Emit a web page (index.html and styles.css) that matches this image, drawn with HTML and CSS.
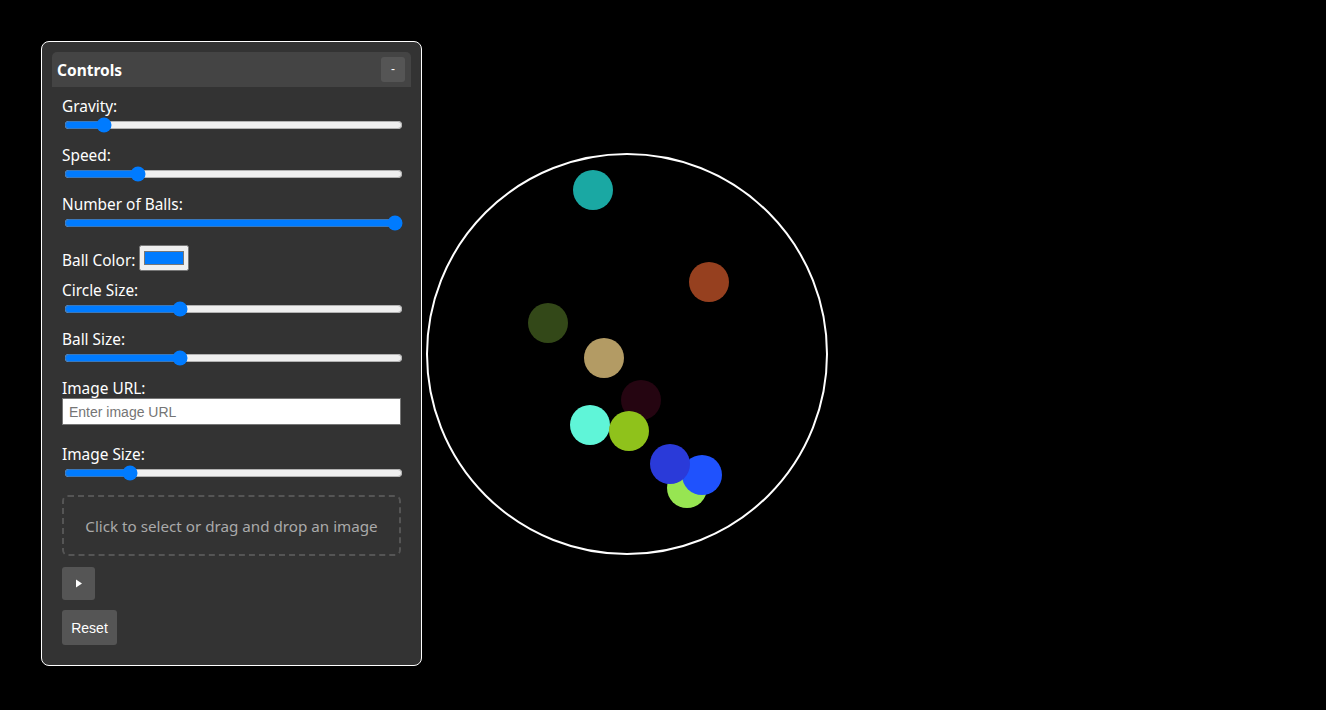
FILE: index.html
```html
<!DOCTYPE html>
<html lang="en">
<head>
<meta charset="utf-8">
<title>Bouncing Balls</title>
<link rel="stylesheet" href="styles.css">
</head>
<body>
<div class="stage">
  <svg class="canvas" width="1326" height="710" viewBox="0 0 1326 710" xmlns="http://www.w3.org/2000/svg">
    <circle cx="627" cy="354" r="200" fill="none" stroke="#ffffff" stroke-width="2"/>
    <circle cx="593" cy="190" r="20" fill="#1aa8a3"/>
    <circle cx="709" cy="282" r="20" fill="#96401f"/>
    <circle cx="548" cy="323" r="20" fill="#334818"/>
    <circle cx="604" cy="358" r="20" fill="#b39b64"/>
    <circle cx="641" cy="400" r="20" fill="#250511"/>
    <circle cx="590" cy="425" r="20" fill="#5ff5d8"/>
    <circle cx="629" cy="431" r="20" fill="#8fc21b"/>
    <circle cx="687" cy="488" r="20" fill="#97e552"/>
    <circle cx="702" cy="475" r="20" fill="#1f52fd"/>
    <circle cx="670" cy="464" r="20" fill="#2a3ad9"/>
  </svg>
</div>

<div class="panel">
  <div class="panel-header">
    <span class="panel-title">Controls</span>
    <button class="collapse-btn">-</button>
  </div>
  <div class="panel-body">
    <div class="control">
      <label class="control-label">Gravity:</label>
      <input class="slider" type="range" min="0" max="1000" value="100">
    </div>
    <div class="control">
      <label class="control-label">Speed:</label>
      <input class="slider" type="range" min="0" max="1000" value="204">
    </div>
    <div class="control">
      <label class="control-label">Number of Balls:</label>
      <input class="slider" type="range" min="0" max="1000" value="1000">
    </div>
    <div class="control color-row">
      <label class="control-label inline">Ball Color:</label>
      <input class="color-input" type="color" value="#007bff">
    </div>
    <div class="control">
      <label class="control-label">Circle Size:</label>
      <input class="slider" type="range" min="0" max="1000" value="334">
    </div>
    <div class="control">
      <label class="control-label">Ball Size:</label>
      <input class="slider" type="range" min="0" max="1000" value="334">
    </div>
    <div class="control">
      <label class="control-label">Image URL:</label>
      <input class="text-input" type="text" placeholder="Enter image URL">
    </div>
    <div class="control">
      <label class="control-label">Image Size:</label>
      <input class="slider" type="range" min="0" max="1000" value="180">
    </div>
    <div class="dropzone">Click to select or drag and drop an image</div>
    <button class="btn play-btn"><svg width="8" height="9" viewBox="0 0 8 9"><path d="M1 0.5 L7 4.5 L1 8.5 Z" fill="#ffffff"/></svg></button>
    <button class="btn reset-btn">Reset</button>
  </div>
</div>
</body>
</html>
```

FILE: styles.css
```css
html, body {
  margin: 0;
  padding: 0;
  background: #000000;
  overflow: hidden;
}

.stage {
  width: 1326px;
  height: 710px;
}

.canvas {
  display: block;
}

.panel {
  position: absolute;
  left: 41px;
  top: 41px;
  width: 359px;
  padding: 10px;
  background: #333333;
  border: 1px solid #ffffff;
  border-radius: 8px;
  font-family: "Noto Sans", "Open Sans", sans-serif;
  color: #ffffff;
}

.panel-header {
  display: flex;
  align-items: center;
  justify-content: space-between;
  height: 35px;
  padding: 0 6px 0 5px;
  background: #444444;
  border-radius: 5px 5px 0 0;
  box-sizing: border-box;
}

.panel-title {
  font-size: 15.5px;
  font-weight: 700;
}

.collapse-btn {
  width: 24px;
  height: 25px;
  padding: 0;
  border: none;
  border-radius: 3px;
  background: #555555;
  color: #ffffff;
  font-family: "Liberation Sans", Arial, sans-serif;
  font-size: 12px;
  line-height: 25px;
}

.panel-body {
  padding: 10px;
}

.control {
  display: flow-root;
  margin-bottom: 10px;
}

.control-label {
  display: block;
  font-size: 15.4px;
  line-height: 19px;
}

.control-label.inline {
  display: inline;
}

.slider {
  display: block;
  width: 100%;
  height: 16px;
  margin: 1px 0 3px 2px;
  accent-color: #007bff;
}

.color-row {
  display: flex;
  align-items: flex-end;
  gap: 4px;
  height: 27px;
}

.color-row .control-label {
  margin-bottom: 1px;
}

.color-input {
  width: 50px;
  height: 26px;
  margin: 0;
  padding: 1px 2px;
}

.text-input {
  display: block;
  width: 100%;
  height: 27px;
  margin: 0 0 10px;
  padding: 0 6px;
  box-sizing: border-box;
  border: 1px solid #767676;
  background: #ffffff;
  font-family: "Liberation Sans", Arial, sans-serif;
  font-size: 14px;
  color: #000000;
}

.text-input::placeholder {
  color: #757575;
}

.dropzone {
  display: flex;
  align-items: center;
  justify-content: center;
  height: 61px;
  margin-top: 11px;
  border: 2px dashed #555555;
  border-radius: 6px;
  box-sizing: border-box;
  color: #aaaaaa;
  font-size: 15.2px;
}

.btn {
  display: flex;
  align-items: center;
  justify-content: center;
  border: none;
  border-radius: 3px;
  background: #555555;
  color: #ffffff;
  font-family: "Liberation Sans", Arial, sans-serif;
  font-size: 14px;
  padding: 0;
}

.play-btn {
  width: 33px;
  height: 33px;
  margin-top: 11px;
}

.reset-btn {
  width: 55px;
  height: 35px;
  margin-top: 10px;
}
```
